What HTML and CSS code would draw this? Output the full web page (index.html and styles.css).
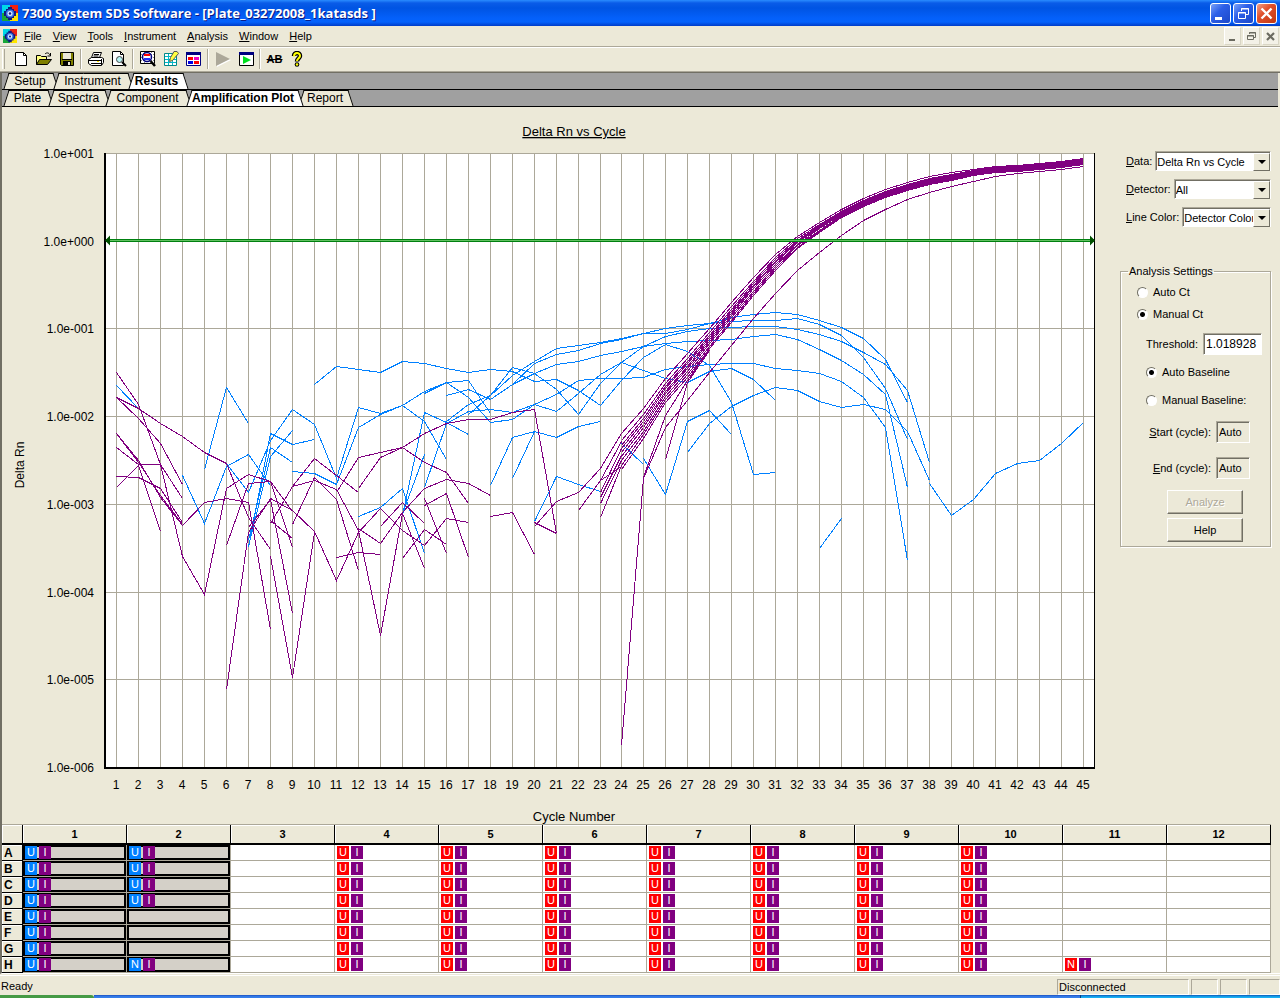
FILE: index.html
```html
<!DOCTYPE html>
<html lang="en">
<head>
<meta charset="utf-8">
<title>7300 System SDS Software</title>
<link rel="stylesheet" href="styles.css">
</head>
<body>
<svg width="0" height="0" class="defs" aria-hidden="true">
  <symbol id="logo" viewBox="0 0 16 16">
    <path fill="#00d8e8" d="M0 0h8v8H0z"/><path fill="#f02010" d="M8 0h8v8H8z"/><path fill="#18a838" d="M0 8h8v8H0z"/><path fill="#ffe600" d="M8 8h8v8H8z"/>
    <path fill="#101880" d="M6 2h4v2h2v2h2v5h-2v2h-2v2H6v-2H4v-2H2V6h2V4h2z"/><circle cx="8" cy="8.500" r="4" fill="#3a78e8"/><circle cx="8" cy="8.500" r="2.500" fill="#d8e8ff"/><circle cx="8" cy="8.500" r="1.200" fill="#101880"/>
  </symbol>
</svg>

<header class="titlebar">
  <svg class="logo"><use href="#logo"/></svg>
  <h1>7300 System SDS Software - [Plate_03272008_1katasds ]</h1>
  <div class="winbtns">
    <button class="win" aria-label="Minimize"><svg viewBox="0 0 19 19"><path fill="#fff" d="M4 13h7v3H4z"/></svg></button>
    <button class="win" aria-label="Restore"><svg viewBox="0 0 19 19" fill="none" stroke="#fff"><path d="M7.500 7V4.500h7v6H12M7 5h8"/><path d="M4.500 8.500h7v6h-7zM4 9h8"/></svg></button>
    <button class="win close" aria-label="Close"><svg viewBox="0 0 19 19"><path stroke="#fff" stroke-width="2.400" d="M4.500 4.500l10 10M14.500 4.500l-10 10"/></svg></button>
  </div>
</header>

<nav class="menubar">
  <svg class="logo"><use href="#logo"/></svg>
  <button><u>F</u>ile</button><button><u>V</u>iew</button><button><u>T</u>ools</button><button><u>I</u>nstrument</button><button><u>A</u>nalysis</button><button><u>W</u>indow</button><button><u>H</u>elp</button>
  <div class="mdi">
    <button aria-label="Minimize document"><svg viewBox="0 0 15 15"><path fill="#6b6a60" d="M4 10h6v2H4z"/></svg></button>
    <button aria-label="Restore document"><svg viewBox="0 0 15 15" fill="none" stroke="#6b6a60"><path d="M5.500 5V3.500h6v5H10M5 4h7"/><path d="M3.500 6.500h6v4h-6zM3 7h7"/></svg></button>
    <button aria-label="Close document"><svg viewBox="0 0 15 15"><path stroke="#6b6a60" stroke-width="2.200" d="M4 4l7 7M11 4l-7 7"/></svg></button>
  </div>
</nav>

<div class="toolbar">
  <i class="grip"></i>
  <button aria-label="New"><svg viewBox="0 0 16 16"><path fill="#fff" stroke="#000" d="M2.500 1.500h8l3 3v10h-11z"/><path fill="none" stroke="#000" d="M10.500 1.500v3h3"/></svg></button>
  <button aria-label="Open"><svg viewBox="0 0 16 16"><path fill="#ffff80" stroke="#000" d="M.5 13.500v-9h4l1 1h5v3"/><path fill="#808000" stroke="#000" d="M.5 13.500l3-5h12l-4 5z"/><path fill="none" stroke="#000" d="M9 3c2-2 4-1 5 1M14.500 2v3h-3"/></svg></button>
  <button aria-label="Save"><svg viewBox="0 0 16 16"><path fill="#808000" stroke="#000" d="M1.500 1.500h13v13h-12l-1-1z"/><path fill="#ece9d8" d="M4 2h8v6H4z"/><path d="M3 8h10v1H3zM4 10h8v5H4z"/><path fill="#ece9d8" d="M9 11h2v3H9z"/></svg></button>
  <i class="sep"></i>
  <button aria-label="Print"><svg viewBox="0 0 16 16"><path fill="#fff" stroke="#000" d="M5.500 1.500h8l-2 5h-8z"/><path stroke="#000" d="M6 3.500h5M5.500 5h5"/><path fill="#fff" stroke="#000" d="M.5 8.500l3-2h10l2 1v4l-2 3h-10l-3-2z"/><path d="M1 9h12v1H1zM3 12h10v1H3zM13 8h1v6h-1z"/><path fill="#ffe600" d="M9 10h2v1H9z"/></svg></button>
  <button aria-label="Print preview"><svg viewBox="0 0 16 16"><path fill="#fff" stroke="#000" d="M1.500.5h8l3 3v11h-11z"/><path fill="none" stroke="#000" d="M9.500.5v3h3"/><circle cx="8.500" cy="8.500" r="3" fill="#b8f4f4" stroke="#444"/><path stroke="#000" stroke-width="2" d="M11 11l4 4"/></svg></button>
  <i class="sep"></i>
  <button aria-label="Find well"><svg viewBox="0 0 16 16"><path fill="#fff" stroke="#000" d="M.5.5h14v12H.5z"/><path stroke="#888" stroke-dasharray="1" d="M1 3.500h13M1 6.500h13M1 9.500h13M4.500 1v11M11.500 1v11"/><circle cx="7" cy="6" r="4.500" fill="#fff" stroke="#000080" stroke-width="1.500"/><path fill="red" d="M4 3h6v2H4z"/><path fill="#2030ff" d="M4 7h6v2H4z"/><path stroke="#000" stroke-width="2.500" d="M10.500 10l4.500 5"/></svg></button>
  <button aria-label="Edit plate"><svg viewBox="0 0 16 16"><path fill="#fff" stroke="#088" d="M1.500 2.500h12v12h-12z"/><path stroke="#00b8c8" d="M2 5.500h11M2 8.500h11M2 11.500h11M5.500 3v11M9.500 3v11"/><path fill="#ffff40" stroke="#555" d="M11 .5h3l1.500 2-6 7-3 1 1-4z"/></svg></button>
  <button aria-label="Plate colors"><svg viewBox="0 0 16 16"><path fill="#fff" stroke="#000080" d="M.5 1.500h14v13H.5z"/><path fill="#000080" d="M0 1h15v3H0z"/><path fill="red" d="M2 6h5v3H2z"/><path fill="#f000c0" d="M8 6h5v3H8z"/><path fill="#0000e0" d="M2 10h5v3H2z"/><path fill="red" d="M8 10h5v3H8z"/></svg></button>
  <i class="sep"></i>
  <button aria-label="Run" disabled><svg viewBox="0 0 16 16"><path fill="#fff" d="M2 2l14 7-14 7z"/><path fill="#aca899" d="M1 1l14 7-14 7z"/></svg></button>
  <button aria-label="Analyze"><svg viewBox="0 0 16 16"><path fill="#fff" stroke="#000" d="M1.500 1.500h14v13h-14z"/><path fill="#000080" d="M1 1h15v3H1z"/><path fill="#00e020" d="M5 5l8 4-8 4z"/></svg></button>
  <i class="sep"></i>
  <button class="ab" aria-label="Replace">AB</button>
  <button aria-label="About"><svg viewBox="0 0 16 16"><path fill="none" stroke="#000" stroke-width="4.500" d="M4 5c0-4 6-4 6 0 0 2-3 2.500-3 5.500"/><path fill="none" stroke="#ff0" stroke-width="2" d="M4 5.500c0-4.500 6-4.500 6-.5 0 2-3 2.500-3 5"/><circle cx="7" cy="13.500" r="2.300"/><circle cx="7" cy="13.500" r="1.200" fill="#ff0"/></svg></button>
</div>

<main class="workspace">
  <div class="tabs tabs-top">
    <button>Setup</button><button>Instrument</button><button class="active">Results</button>
  </div>
  <div class="tabs tabs-sub">
    <button>Plate</button><button>Spectra</button><button>Component</button><button class="active">Amplification Plot</button><button>Report</button>
  </div>
  <div class="content">
    <svg id="chart" class="chart" viewBox="2 107 1112 717" role="img" aria-label="Delta Rn vs Cycle"></svg>
    <form class="side">
      <div class="row"><label for="data"><u>D</u>ata:</label><span class="combo"><select id="data"><option>Delta Rn vs Cycle</option></select></span></div>
      <div class="row"><label for="det"><u>D</u>etector:</label><span class="combo"><select id="det"><option>All</option></select></span></div>
      <div class="row"><label for="col"><u>L</u>ine Color:</label><span class="combo"><select id="col"><option>Detector Color</option></select></span></div>
      <fieldset>
        <legend>Analysis Settings</legend>
        <label class="opt"><input type="radio" name="ct">Auto Ct</label>
        <label class="opt"><input type="radio" name="ct" checked>Manual Ct</label>
        <div class="field wide"><label for="thr">Threshold:</label><input id="thr" type="text" value="1.018928"></div>
        <label class="opt inner"><input type="radio" name="base" checked>Auto Baseline</label>
        <label class="opt inner"><input type="radio" name="base">Manual Baseline:</label>
        <div class="field"><label for="start"><u>S</u>tart (cycle):</label><input id="start" type="text" value="Auto" readonly></div>
        <div class="field"><label for="end"><u>E</u>nd (cycle):</label><input id="end" type="text" value="Auto" readonly></div>
        <button type="button" class="push" disabled>Analyze</button>
        <button type="button" class="push">Help</button>
      </fieldset>
    </form>
  </div>
  <table id="plate" class="plate"></table>
</main>

<footer class="status">
  <span class="ready">Ready</span><span class="pane conn">Disconnected</span><span class="pane"></span><span class="pane"></span><span class="pane last"></span>
</footer>
<div class="taskbar"><i></i><i></i><i></i></div>
<script src="chart.js"></script>
</body>
</html>
```
FILE: styles.css
```css
* { box-sizing: border-box; }
body {
  margin: 0;
  min-height: 100vh;
  display: flex;
  flex-direction: column;
  background: #ece9d8;
  color: #000;
  font: 11px/14px "Liberation Sans", Arial, sans-serif;
}
button, input, select { font: inherit; color: inherit; margin: 0; padding: 0; border: 0; border-radius: 0; background: none; }
svg { display: block; }
.defs { position: absolute; }
.logo { width: 16px; height: 16px; }

.titlebar {
  height: 26px;
  display: flex;
  align-items: center;
  gap: 4px;
  padding: 0 3px 0 2px;
  background: linear-gradient(#2a8cff 0, #0a5ce8 3px, #0054e3 8px, #0460fa 18px, #0462fc 22px, #003cc8 26px);
}
.titlebar h1 { margin: 0; flex: 1; font: bold 13px/16px "Open Sans", sans-serif; color: #fff; text-shadow: 1px 1px #0a1883; white-space: nowrap; }
.winbtns { display: flex; gap: 2px; }
.win { width: 21px; height: 21px; border: 1px solid #fff; border-radius: 3px; background: linear-gradient(135deg, #7aa2f8, #2c5fe8 40%, #1c48c8); }
.win.close { background: linear-gradient(135deg, #f0a088, #e0502c 40%, #c03810); }

.menubar { height: 20px; display: flex; align-items: center; gap: 11px; padding: 0 1px 0 3px; }
.menubar .logo { width: 14px; margin-right: -4px; }
.menubar > button { height: 18px; }
.mdi { margin-left: auto; display: flex; gap: 2px; }
.mdi button { width: 17px; height: 18px; background: #f3f1e7; border: 1px solid; border-color: #fff #d8d5c5 #d8d5c5 #fff; }

.toolbar {
  height: 26px;
  display: flex;
  align-items: center;
  border-top: 1px solid #aca899;
  border-bottom: 1px solid #aca899;
  box-shadow: inset 0 1px #fff;
}
.toolbar button { width: 23px; height: 22px; display: grid; place-items: center; }
.toolbar svg { width: 16px; height: 16px; }
.toolbar .ab { font: bold 11px/16px "Liberation Sans", sans-serif; text-decoration: line-through; }
.grip { width: 3px; height: 20px; margin: 0 4px 0 2px; border-left: 1px solid #fff; border-right: 1px solid #aca899; }
.sep { width: 2px; height: 20px; margin: 0 2px; border-left: 1px solid #aca899; border-right: 1px solid #fff; }

.workspace { flex: 1; border-left: 2px solid #716f64; border-top: 1px solid #716f64; border-bottom: 1px solid #fff; }
.tabs { display: grid; justify-content: start; height: 17px; padding-left: 4px; background: #a0a0a0; border-bottom: 1px solid #000; margin-right: 2px; font: 12px/16px "Liberation Sans", Arial, sans-serif; }
.tabs-top { grid-template-columns: 50px 75px 55px; }
.tabs-sub { grid-template-columns: 45px 57px 81px 112px 50px; }
.tabs button { position: relative; z-index: 0; height: 16px; padding-right: 2px; white-space: nowrap; }
.tabs button::before, .tabs button::after { content: ""; position: absolute; z-index: -1; top: 0; bottom: 0; background: #ece9d8; border-top: 1px solid #000; }
.tabs button::before { left: 0; right: 40%; border-left: 1px solid #000; transform: skewX(-18deg); }
.tabs button::after { left: 40%; right: 0; border-right: 1px solid #000; transform: skewX(18deg); }
.tabs .active { font-weight: bold; z-index: 1; padding-right: 4px; }
.tabs .active::before, .tabs .active::after { background: #fff; }

.content { display: flex; align-items: flex-start; }
.chart { flex: 1; min-width: 0; height: auto; font: 12px "Liberation Sans", Arial, sans-serif; }
.chart .big { font-size: 13px; }
.chart .u { text-decoration: underline; }
.chart polyline { fill: none; stroke-width: 1; }
.chart .blue { stroke: #0080ff; }
.chart .purple { stroke: #800080; }

.side { width: 166px; padding: 44px 9px 0 6px; }
.row { display: flex; align-items: center; gap: 3px; height: 20px; margin: 0 0 8px 6px; white-space: nowrap; }
.combo { position: relative; flex: 1; height: 20px; background: #fff; border: 1px solid; border-color: #aca899 #fff #fff #aca899; box-shadow: inset 1px 1px #716f64; }
.combo select { width: 100%; height: 18px; padding: 1px 0 0 1px; appearance: none; }
.combo::before { content: ""; position: absolute; top: 1px; right: 0; width: 15px; height: 16px; background: #ece9d8; border: 1px solid; border-color: #fff #716f64 #716f64 #fff; pointer-events: none; }
.combo::after { content: ""; position: absolute; top: 8px; right: 4px; border: 4px solid transparent; border-top-color: #000; border-bottom: 0; pointer-events: none; }
fieldset { margin: 37px 0 0; padding: 3px 8px 4px; border: 1px solid #aca899; box-shadow: 1px 1px #fff, inset 1px 1px #fff; }
legend { padding: 0 1px; margin-left: -1px; }
.opt { display: flex; align-items: center; gap: 5px; height: 22px; padding-left: 8px; white-space: nowrap; }
.opt.inner { height: 28px; padding-left: 17px; }
.opt input { appearance: none; width: 11px; height: 11px; border-radius: 50%; background: #fff; border: 1px solid; border-color: #716f64 #fff #fff #716f64; }
.opt input:checked { background: radial-gradient(circle, #000 0 2px, #fff 3px); }
.field { display: flex; align-items: center; justify-content: flex-end; gap: 5px; padding-right: 12px; height: 36px; }
.field input { width: 34px; height: 22px; padding: 0 2px; border: 1px solid; border-color: #aca899 #fff #fff #aca899; box-shadow: inset 1px 1px #716f64; }
.field.wide { height: 33px; padding: 4px 0 0; }
.field.wide input { width: 59px; background: #fff; font-size: 12px; }
.push { display: block; width: 76px; height: 24px; margin: 4px 0 0 38px; border: 1px solid; border-color: #fff #716f64 #716f64 #fff; box-shadow: inset -1px -1px #aca899; }
.push:disabled { color: #aca899; text-shadow: 1px 1px #fff; }

.plate { width: calc(100% - 9px); table-layout: fixed; border-collapse: separate; border-spacing: 0; border-top: 1px solid #aca899; }
.plate th { padding: 0; font: bold 11px/14px "Liberation Sans", sans-serif; background: #ece9d8; border-right: 1px solid #000; border-bottom: 1px solid #000; box-shadow: inset 1px 1px #fff; }
.plate thead th { height: 20px; border-bottom: 2px solid #000; }
.plate th:first-child { width: 21px; }
.plate tbody th { height: 16px; text-align: left; padding-left: 2px; font-size: 12px; }
.plate td { height: 16px; padding: 0 0 0 2px; background: #fff; border: solid #aca899; border-width: 0 1px 1px 0; }
.plate .sel { background: #d4d0c8; box-shadow: inset 0 0 0 2px #000; }
.wells { display: flex; gap: 2px; height: 13px; }
.wells b { width: 12px; font: 11px/13px "Liberation Sans", sans-serif; color: #fff; text-align: center; }
.b { background: #0080ff; } .r { background: red; } .p { background: #800080; }

.status { height: 20px; margin-top: 1px; border-top: 1px solid #fff; display: flex; align-items: flex-end; gap: 2px; }
.ready { flex: 1; padding: 0 0 2px 1px; }
.pane { width: 27px; height: 16px; border: 1px solid; border-color: #aca899 #fff #fff #aca899; }
.pane.conn { width: 132px; line-height: 15px; padding-left: 1px; }
.pane.last { width: 31px; }
.taskbar { height: 4px; display: flex; }
.taskbar i:nth-child(1) { width: 94px; background: #459a45; border-radius: 0 3px 0 0; }
.taskbar i:nth-child(2) { flex: 1; background: linear-gradient(#1c4fc0, #3a86f0 2px, #2a66dc); }
.taskbar i:nth-child(3) { width: 200px; background: linear-gradient(#0c58b8, #18b0f4 2px); border-left: 1px solid #084080; }
```
FILE: chart.js
```js
const NS = 'http://www.w3.org/2000/svg';
const chart = document.getElementById('chart');
const STEP = 967 / 44;
const cx = n => Math.round(116 + (n - 1) * STEP);

function add(tag, attrs, text) {
  const el = document.createElementNS(NS, tag);
  for (const k in attrs) el.setAttribute(k, attrs[k]);
  if (text !== undefined) el.textContent = text;
  chart.appendChild(el);
}
const rect = (x, y, width, height, fill) => add('rect', { x, y, width, height, fill });

rect(106, 153, 988, 614, '#fff');
for (let i = 0; i < 8; i++) {
  const y = Math.round(153 + i * 87.7);
  rect(106, y, 988, 1, '#aca899');
  add('text', { x: 94, y: y + 5, 'text-anchor': 'end' }, '1.0e' + (i < 2 ? '+00' + (1 - i) : '-00' + (i - 1)));
}
for (let n = 1; n <= 45; n++) {
  rect(cx(n), 154, 1, 613, '#aca899');
  add('text', { x: cx(n), y: 789, 'text-anchor': 'middle' }, n);
}

// Each trace: first cycle, then one height per cycle.
const blue = [
  [1,385,408],[4,475,523,466,454,485],[5,469,387,423],
  [6,463,492,440,409,424,478,407,413,405,391,382,380,413],
  [7,547,433,444,439],[7,540,447,462],[7,546,456,430],
  [9,471,473,484,427,414,405,421,459],
  [10,384,366,369,372,361,363,368,372,369,371,381,379,390,405,380,357,344,351,365,402,474,472],
  [12,516,507,488,553],[14,515,412,422,434],[14,513,454],
  [15,393,382,397,422,419,404,411,393,374,362,346,336,331,328,327,326,326,329,334,341,352,364,390,462],
  [15,487,423,411,409,412,404,394,380,378,378,377,369,366,364,363,363,368,370,373,381,397,427,560],
  [16,395,389,399,384,373,364,361,355,351,346,343,341,340,339,336,334,339,349,360,374,394,487],
  [16,421,404,395,375,361,348,345,342,338,333,328,325,323,317,314,312,314,320,327,338,359,402],
  [18,399,384,363,354,350,343,339,333,333,329,323,321,320,320,318,324,335,357,388,439],
  [17,414,395,367,373,389,414,383,362,370,378,382,371,368,379,400],
  [18,485,437,431,437,426,421],[19,478,431],[20,521,476,484,491],
  [24,443,464],[25,458,494,421,410,434],
  [27,452,423,406,395,387,390,401,407,404,409,431,480],
  [33,548,518],[38,483,515,499,473,463,460,443,422]
];
const purple = [
  [1,372,404,464,556,594,488,474,481,511],[1,397,408,423,436,452,463,517,549],
  [1,397,418,443,484],[1,433,460,497,525,502,498,502,629],[1,433,462,495,524],
  [1,447,464,464,498],[1,487,465,531],[1,476,477,488,522],
  [6,689,532,498,510,531,580,532,508,530,545,518,522],
  [6,545,483,481,547],[8,556,677,532],[7,527,499,613],[8,520,538],
  [8,523,486,458,475,492],[9,486,480,489,530,635,513,568],[9,524,477,499,570],
  [11,557,552,554],[11,492,457,452,447,433,423,419,419,412,409,533],
  [12,488,457,447,462,472,503],[12,528,543,512,488,479,483,495],
  [13,526,502,523],[14,558,529,544],[15,498,553],[15,505,493,557],
  [18,516,512,554],[20,522,533],[20,526,501,492,468,433],[22,510,480,441],
  [23,517,465],[23,503,460],[23,497,455],[23,492,448],[23,480,466],
  [24,745,478,427,400,372,345,318,293,270,252,235,220,209,199,192,186,181,176,173,171,169,166],
  [25,477,415,380,348],[26,459,382,350]
];

// Amplified wells share one sigmoid; each well sits at its own offset inside the band.
const mid = [451,423,390,365,338,312,286,262,242,227,213,202,193,186,180,176,172,169,168,166,164,161];
const half = [18,15,12,12,10,10,9,8,6,5,4,4,4,4,4,4,3,3,3,3,3,3];
for (const t of [-1,-.6,-.35,-.15,.05,.25,.5,.75,1]) {
  purple.push([24, ...mid.map((m, i) => Math.round(m + half[i] * t))]);
}
function draw(list, cls) {
  for (const [first, ...ys] of list) {
    add('polyline', { class: cls, 'shape-rendering': 'crispEdges',
      points: ys.map((y, i) => (cx(first + i) + 0.5) + ',' + (y + 0.5)).join(' ') });
  }
}
draw(blue, 'blue');
draw(purple, 'purple');

rect(104, 153, 2, 616, '#000');
rect(104, 767, 991, 2, '#000');
rect(1094, 153, 1, 615, '#000');
rect(106, 239, 988, 3, '#008010');
rect(106, 240, 988, 1, '#60c060');
add('path', { d: 'M105 240.500l5-5v10zM1095 240.500l-5-5v10z', fill: '#005000' });

add('text', { x: 574, y: 136, 'text-anchor': 'middle', class: 'big u' }, 'Delta Rn vs Cycle');
add('text', { x: 574, y: 821, 'text-anchor': 'middle', class: 'big' }, 'Cycle Number');
add('text', { transform: 'translate(24 465) rotate(-90)', 'text-anchor': 'middle' }, 'Delta Rn');

// Plate map: "U" unknown, "N" no-template control, "I" internal control.
const sample = (row, col) => {
  if (col === 1) return 'Ub';
  if (col === 2) return row < 4 ? 'Ub' : row === 7 ? 'Nb' : '';
  if (col >= 4 && col <= 10) return 'Ur';
  return col === 11 && row === 7 ? 'Nr' : '';
};
let html = '<thead><tr><th></th>';
for (let c = 1; c <= 12; c++) html += `<th scope="col">${c}</th>`;
html += '</tr></thead><tbody>';
[...'ABCDEFGH'].forEach((name, r) => {
  html += `<tr><th scope="row">${name}</th>`;
  for (let c = 1; c <= 12; c++) {
    const s = sample(r, c);
    html += `<td${c < 3 ? ' class="sel"' : ''}>` + (s ? `<div class="wells"><b class="${s[1]}">${s[0]}</b><b class="p">I</b></div>` : '') + '</td>';
  }
  html += '</tr>';
});
document.getElementById('plate').innerHTML = html + '</tbody>';
```
